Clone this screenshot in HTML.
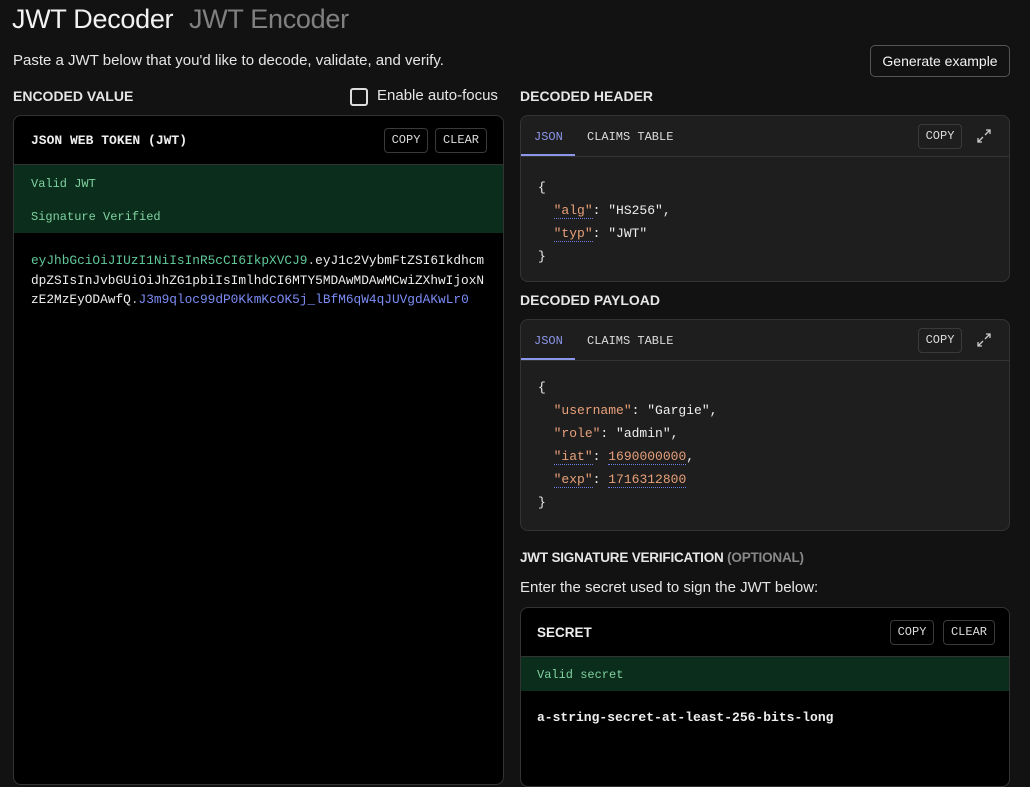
<!DOCTYPE html>
<html><head><meta charset="utf-8"><style>
*{box-sizing:border-box;margin:0;padding:0}
body{width:1030px;height:768px;overflow:hidden;background:#121212;color:#e8e8e8;font-family:"Liberation Sans",sans-serif;position:relative}
.a{position:absolute;white-space:nowrap}
.mono{font-family:"Liberation Mono",monospace}
.btn{position:absolute;border:1px solid #3a3a3a;border-radius:4px;font-family:"Liberation Mono",monospace;font-size:12px;color:#ddd;text-align:center;line-height:23px;height:25px}
.box{position:absolute;border:1px solid #333;border-radius:8px;overflow:hidden}
.h{font-weight:bold;font-size:14px;color:#e6e6e6}
.k{color:#e8a07a;border-bottom:1px dotted #6b7de0}
.n{color:#e8a07a;border-bottom:1px dotted #6b7de0}
</style></head><body>
<div class="a" style="left:12px;top:4px;font-size:27px;letter-spacing:-0.3px;color:#f2f2f2">JWT Decoder</div>
<div class="a" style="left:189px;top:4px;font-size:27px;letter-spacing:-0.3px;color:#808080">JWT Encoder</div>
<div class="a" style="left:13px;top:52px;font-size:15px;color:#e6e6e6">Paste a JWT below that you'd like to decode, validate, and verify.</div>
<div class="a" style="left:870px;top:45px;width:140px;height:32px;border:1px solid #555;border-radius:5px;font-size:14px;line-height:30px;text-align:center;color:#f2f2f2">Generate example</div>
<div class="a h" style="left:13px;top:88px">ENCODED VALUE</div>
<div class="a" style="left:350px;top:88px;width:18px;height:18px;border:2px solid #ddd;border-radius:3px"></div>
<div class="a" style="left:377px;top:87px;font-size:15px;color:#e6e6e6">Enable auto-focus</div>

<div class="box" style="left:13px;top:115px;width:491px;height:670px;background:#000">
  <div class="a mono" style="left:17px;top:17px;font-size:13px;font-weight:bold;color:#eee">JSON WEB TOKEN (JWT)</div>
  <div class="btn" style="left:370px;top:12px;width:44px">COPY</div>
  <div class="btn" style="left:421px;top:12px;width:52px">CLEAR</div>
  <div style="position:absolute;left:0;top:48px;width:100%;height:1px;background:#333"></div>
  <div style="position:absolute;left:0;top:49px;width:100%;height:68px;background:#0b2e1c"></div>
  <div class="a mono" style="left:17px;top:61px;font-size:12px;color:#7fd1a0">Valid JWT</div>
  <div class="a mono" style="left:17px;top:94px;font-size:12px;color:#7fd1a0">Signature Verified</div>
  <div class="a mono" style="left:17px;top:135px;font-size:12.8px;line-height:19.5px;white-space:pre"><span style="color:#5fc99a">eyJhbGciOiJIUzI1NiIsInR5cCI6IkpXVCJ9</span><span style="color:#bbb">.</span><span style="color:#eee">eyJ1c2VybmFtZSI6Ikdhcm
dpZSIsInJvbGUiOiJhZG1pbiIsImlhdCI6MTY5MDAwMDAwMCwiZXhwIjoxN
zE2MzEyODAwfQ</span><span style="color:#bbb">.</span><span style="color:#7b8cf5">J3m9qloc99dP0KkmKcOK5j_lBfM6qW4qJUVgdAKwLr0</span></div>
</div>

<div class="a h" style="left:520px;top:88px">DECODED HEADER</div>
<div class="box" style="left:520px;top:115px;width:490px;height:167px;background:#1e1e1e">
  <div class="a mono" style="left:13px;top:14px;font-size:12px;color:#8a96e8">JSON</div>
  <div class="a mono" style="left:66px;top:14px;font-size:12px;color:#ddd">CLAIMS TABLE</div>
  <div style="position:absolute;left:0;top:38px;width:54px;height:2px;background:#8a96e8"></div>
  <div style="position:absolute;left:0;top:40px;width:100%;height:1px;background:#333"></div>
  <div class="btn" style="left:397px;top:8px;width:44px;background:#1e1e1e">COPY</div>
  <svg class="a" style="left:456px;top:13px" width="14" height="14" viewBox="0 0 14 14" fill="none" stroke="#ccc" stroke-width="1.3"><path d="M8 6L13 1M9 1h4v4M6 8L1 13M1 9v4h4"/></svg>
  <div class="a mono" style="left:17px;top:60px;font-size:13px;line-height:23px;white-space:pre;color:#eee">{
  <span class="k">"alg"</span>: "HS256",
  <span class="k">"typ"</span>: "JWT"
}</div>
</div>

<div class="a h" style="left:520px;top:292px">DECODED PAYLOAD</div>
<div class="box" style="left:520px;top:319px;width:490px;height:212px;background:#1e1e1e">
  <div class="a mono" style="left:13px;top:14px;font-size:12px;color:#8a96e8">JSON</div>
  <div class="a mono" style="left:66px;top:14px;font-size:12px;color:#ddd">CLAIMS TABLE</div>
  <div style="position:absolute;left:0;top:38px;width:54px;height:2px;background:#8a96e8"></div>
  <div style="position:absolute;left:0;top:40px;width:100%;height:1px;background:#333"></div>
  <div class="btn" style="left:397px;top:8px;width:44px;background:#1e1e1e">COPY</div>
  <svg class="a" style="left:456px;top:13px" width="14" height="14" viewBox="0 0 14 14" fill="none" stroke="#ccc" stroke-width="1.3"><path d="M8 6L13 1M9 1h4v4M6 8L1 13M1 9v4h4"/></svg>
  <div class="a mono" style="left:17px;top:56px;font-size:13px;line-height:23px;white-space:pre;color:#eee">{
  <span style="color:#e8a07a">"username"</span>: "Gargie",
  <span style="color:#e8a07a">"role"</span>: "admin",
  <span class="k">"iat"</span>: <span class="n">1690000000</span>,
  <span class="k">"exp"</span>: <span class="n">1716312800</span>
}</div>
</div>

<div class="a" style="left:520px;top:550px;font-size:13.5px;font-weight:bold;color:#e6e6e6;letter-spacing:-0.2px">JWT SIGNATURE VERIFICATION <span style="color:#888">(OPTIONAL)</span></div>
<div class="a" style="left:520px;top:579px;font-size:15px;color:#e6e6e6">Enter the secret used to sign the JWT below:</div>
<div class="box" style="left:520px;top:607px;width:490px;height:180px;background:#000">
  <div class="a" style="left:16px;top:17px;font-size:13.5px;font-weight:bold;color:#eee">SECRET</div>
  <div class="btn" style="left:369px;top:12px;width:44px">COPY</div>
  <div class="btn" style="left:422px;top:12px;width:52px">CLEAR</div>
  <div style="position:absolute;left:0;top:48px;width:100%;height:1px;background:#333"></div>
  <div style="position:absolute;left:0;top:49px;width:100%;height:34px;background:#0b2e1c"></div>
  <div class="a mono" style="left:16px;top:60px;font-size:12px;color:#7fd1a0">Valid secret</div>
  <div class="a mono" style="left:16px;top:102px;font-size:13px;font-weight:bold;color:#eee">a-string-secret-at-least-256-bits-long</div>
</div>
</body></html>
